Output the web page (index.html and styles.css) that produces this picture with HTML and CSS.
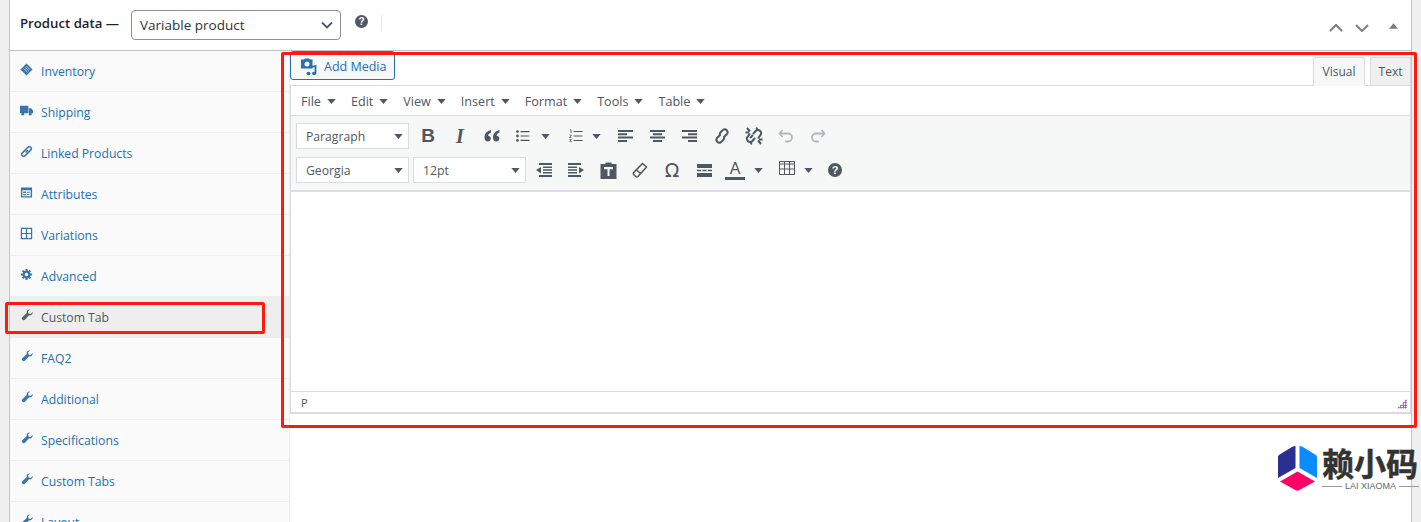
FILE: index.html
```html
<!DOCTYPE html>
<html lang="en">
<head>
<meta charset="utf-8">
<title>Product data</title>
<link rel="stylesheet" href="styles.css">
</head>
<body>
<svg class="defs" width="0" height="0" aria-hidden="true">
  <symbol id="wrench" viewBox="0 0 14 14"><path d="M13.600 3.400c.2 1.200-.1 2.300-1 3.100-.9.900-2.100 1.200-3.200.9L4.600 12.600c-.6.700-1.700.8-2.400.1l-.8-.8c-.7-.7-.6-1.800.1-2.400l5.200-4.800c-.3-1.100 0-2.300.9-3.200.8-.9 1.900-1.200 3.100-1L8.300 2.700l.4 2.500 2.500.5z" fill="currentColor"/></symbol>
  <symbol id="arrow" viewBox="0 0 10 6"><path d="M0 0h10L5 6z" fill="currentColor"/></symbol>
</svg>
<div class="page">
  <section class="box">
    <header class="head">
      <span class="title">Product data —</span>
      <div class="type-select"><span>Variable product</span>
        <svg class="chev" viewBox="0 0 12 8" width="12" height="8"><path d="M1 1.500l5 5 5-5" fill="none" stroke="currentColor" stroke-width="1.800"/></svg>
      </div>
      <span class="q small">?</span>
      <span class="sep"></span>
      <div class="head-actions">
        <svg class="ha" viewBox="0 0 14 8" width="14" height="8"><path d="M1 7l6-6 6 6" fill="none" stroke="currentColor" stroke-width="2"/></svg>
        <svg class="ha down" viewBox="0 0 14 8" width="14" height="8"><path d="M1 1l6 6 6-6" fill="none" stroke="currentColor" stroke-width="2"/></svg>
        <svg class="tri" viewBox="0 0 10 6" width="9" height="6"><path d="M0 6h10L5 0z" fill="currentColor"/></svg>
      </div>
    </header>
    <div class="body">
      <ul class="tabs">
        <li class="tab"><svg class="ti" viewBox="0 0 14 14"><path d="M7 .5L13.500 7 7 13.500.5 7z" fill="currentColor"/><path d="M4 6l4 4M5.500 4.500l4 4M7 3.500l3.500 3.500" stroke="#fff" stroke-width=".7"/></svg><span>Inventory</span></li>
        <li class="tab"><svg class="ti" viewBox="0 0 14 14"><path d="M0 2h9v8H0zM9.500 4.500h2.500l2 2.500v3h-4.500z" fill="currentColor"/><circle cx="3" cy="11" r="1.500" fill="currentColor"/><circle cx="11" cy="11" r="1.500" fill="currentColor"/></svg><span>Shipping</span></li>
        <li class="tab"><svg class="ti" viewBox="0 0 14 14"><path d="M6 8l2.500-2.500M5.500 5.500L2.500 8.500a2 2 0 0 0 3 3l3-3M8.500 8.500l3-3a2 2 0 0 0-3-3l-3 3" fill="none" stroke="currentColor" stroke-width="1.600"/></svg><span>Linked Products</span></li>
        <li class="tab"><svg class="ti" viewBox="0 0 14 14"><path d="M1 1.500h12v11H1zM2.500 4.500v6.500h9V4.500zM3.500 6h3v1.500h-3zM3.500 8.500h3V10h-3zM7.500 6.300h3v1h-3zM7.500 8.800h3v1h-3z" fill="currentColor" fill-rule="evenodd"/></svg><span>Attributes</span></li>
        <li class="tab"><svg class="ti" viewBox="0 0 14 14"><path d="M1.500 1.500h11v11h-11zM7 1.500v11M1.500 7h11" fill="none" stroke="currentColor" stroke-width="1.300"/></svg><span>Variations</span></li>
        <li class="tab"><svg class="ti" viewBox="0 0 14 14"><circle cx="7" cy="7" r="3" fill="none" stroke="currentColor" stroke-width="2.400"/><path d="M7 1v3M7 10v3M1 7h3M10 7h3M2.800 2.800l2.100 2.100M9.100 9.100l2.100 2.100M2.800 11.200l2.100-2.100M9.100 4.900l2.100-2.100" stroke="currentColor" stroke-width="2.200"/></svg><span>Advanced</span></li>
        <li class="tab active"><svg class="ti wr"><use href="#wrench"/></svg><span>Custom Tab</span></li>
        <li class="tab"><svg class="ti wr"><use href="#wrench"/></svg><span>FAQ2</span></li>
        <li class="tab"><svg class="ti wr"><use href="#wrench"/></svg><span>Additional</span></li>
        <li class="tab"><svg class="ti wr"><use href="#wrench"/></svg><span>Specifications</span></li>
        <li class="tab"><svg class="ti wr"><use href="#wrench"/></svg><span>Custom Tabs</span></li>
        <li class="tab"><svg class="ti wr"><use href="#wrench"/></svg><span>Layout</span></li>
      </ul>
      <main class="panel">
        <div class="ed-head">
          <button class="media">
            <svg viewBox="0 0 18 18" width="18" height="18"><path d="M1 1.500h3l1-1h4l1 1h2.500v9H1zM7 3.500a2.500 2.500 0 1 0 0 5 2.500 2.500 0 0 0 0-5z" fill="currentColor" fill-rule="evenodd"/><path d="M9.500 9.500l6-1.500v7.500" fill="none" stroke="currentColor" stroke-width="1.800"/><ellipse cx="8.500" cy="15.500" rx="2" ry="1.800" fill="currentColor"/><ellipse cx="14" cy="15.500" rx="2" ry="1.800" fill="currentColor"/></svg>
            <span>Add Media</span>
          </button>
          <div class="modes">
            <span class="mode visual">Visual</span>
            <span class="mode text">Text</span>
          </div>
        </div>
        <div class="editor">
          <nav class="menubar">
            <span class="mi">File<svg class="ar"><use href="#arrow"/></svg></span>
            <span class="mi">Edit<svg class="ar"><use href="#arrow"/></svg></span>
            <span class="mi">View<svg class="ar"><use href="#arrow"/></svg></span>
            <span class="mi">Insert<svg class="ar"><use href="#arrow"/></svg></span>
            <span class="mi">Format<svg class="ar"><use href="#arrow"/></svg></span>
            <span class="mi">Tools<svg class="ar"><use href="#arrow"/></svg></span>
            <span class="mi">Table<svg class="ar"><use href="#arrow"/></svg></span>
          </nav>
          <div class="toolbar">
            <div class="row">
              <div class="lb">Paragraph<svg class="ar"><use href="#arrow"/></svg></div>
              <div class="btns first">
                <span class="b glyph bold">B</span>
                <span class="b glyph ital">I</span>
                <span class="b"><svg viewBox="0 0 16 14" width="16" height="14"><path d="M7 1C3 2 .5 4.500.5 8.500c0 2.500 1.500 4 3.300 4s3-1.300 3-3-1.200-2.800-2.800-2.800c.3-1.500 1.500-2.700 3-3.200zM15.500 1c-4 1-6.500 3.500-6.500 7.500 0 2.500 1.500 4 3.300 4s3-1.300 3-3-1.200-2.800-2.800-2.800c.3-1.500 1.500-2.700 3-3.200z" fill="currentColor"/></svg></span>
                <span class="b split w53"><svg viewBox="0 0 14 14" width="14" height="14"><path d="M4.500 2h9v1.200h-9zM4.500 6.400h9v1.200h-9zM4.500 10.800h9V12h-9z" fill="currentColor"/><circle cx="1.500" cy="2.600" r="1.400" fill="currentColor"/><circle cx="1.500" cy="7" r="1.400" fill="currentColor"/><circle cx="1.500" cy="11.400" r="1.400" fill="currentColor"/></svg><svg class="ar"><use href="#arrow"/></svg></span>
                <span class="b split w49"><svg viewBox="0 0 14 14" width="14" height="14"><path d="M4.500 2h9v1h-9zM4.500 6.500h9v1h-9zM4.500 11h9v1h-9z" fill="currentColor"/><path d="M1 1l1-.5v3.500M.5 6h2l-2 2.500h2M.5 10.500h2l-1 1 1 1.200h-2" fill="none" stroke="currentColor" stroke-width=".8"/></svg><svg class="ar"><use href="#arrow"/></svg></span>
                <span class="b"><svg viewBox="0 0 15 12" width="15" height="12"><path d="M0 0h15v2H0zM0 3.300h9v2H0zM0 6.600h15v2H0zM0 10h9v2H0z" fill="currentColor"/></svg></span>
                <span class="b"><svg viewBox="0 0 15 12" width="15" height="12"><path d="M0 0h15v2H0zM3 3.300h9v2H3zM0 6.600h15v2H0zM3 10h9v2H3z" fill="currentColor"/></svg></span>
                <span class="b w33"><svg viewBox="0 0 15 12" width="15" height="12"><path d="M0 0h15v2H0zM6 3.300h9v2H6zM0 6.600h15v2H0zM6 10h9v2H6z" fill="currentColor"/></svg></span>
                <span class="b"><svg viewBox="0 0 18 18" width="18" height="18"><path d="M7.500 7.500L4 11a2.900 2.900 0 0 0 4 4.100l2.400-2.400a3 3 0 0 0 .3-3.700M10.500 10.500L14 7a2.900 2.900 0 0 0-4-4.100L7.600 5.300a3 3 0 0 0-.3 3.700" fill="none" stroke="currentColor" stroke-width="2"/></svg></span>
                <span class="b"><svg viewBox="0 0 18 18" width="18" height="18"><path d="M5 6.500L2.800 9.500a3 3 0 0 0 4.500 4.500L10 11M13 11.500l2.200-3a3 3 0 0 0-4.500-4.500L8 7M2 1l3 3.500M.5 5.500H4M16 17l-3-3.500M17.500 12.500H14M12 .5l-.5 3M6 17.500l.5-3M5 11l3-3" fill="none" stroke="currentColor" stroke-width="2"/></svg></span>
                <span class="b muted"><svg viewBox="0 0 16 14" width="16" height="14"><path d="M4.500 1L1.500 4.500 4.500 8M2 4.500h8a4 4 0 0 1 0 8H7" fill="none" stroke="currentColor" stroke-width="1.800"/></svg></span>
                <span class="b muted"><svg viewBox="0 0 16 14" width="16" height="14"><path d="M11.500 1l3 3.500-3 3.500M14 4.500H6a4 4 0 0 0 0 8h3" fill="none" stroke="currentColor" stroke-width="1.800"/></svg></span>
              </div>
            </div>
            <div class="row">
              <div class="lb">Georgia<svg class="ar"><use href="#arrow"/></svg></div>
              <div class="lb">12pt<svg class="ar"><use href="#arrow"/></svg></div>
              <div class="btns second">
                <span class="b"><svg viewBox="0 0 16 14" width="16" height="14"><path d="M3 0h13v2H3zM7 3.500h9v1.500H7zM7 6.200h9v1.500H7zM7 9h9v1.500H7zM3 12h13v2H3zM5 4v6.500L0 7z" fill="currentColor"/></svg></span>
                <span class="b"><svg viewBox="0 0 16 14" width="16" height="14"><path d="M0 0h13v2H0zM0 3.500h9v1.500H0zM0 6.200h9v1.500H0zM0 9h9v1.500H0zM0 12h13v2H0zM11 4v6.500L16 7z" fill="currentColor"/></svg></span>
                <span class="b"><svg viewBox="0 0 17 17" width="17" height="17"><path d="M5.500 2V.5h6V2H16.500v15H.5V2zM4 5v2.200h3.500V14h2V7.200H13V5z" fill="currentColor" fill-rule="evenodd"/></svg></span>
                <span class="b"><svg viewBox="0 0 16 16" width="16" height="16"><path d="M10.500 1.500l4 3.500-8.500 9.500c-.7.700-1.500.700-2.200 0l-2-1.900c-.7-.7-.7-1.500 0-2.200zM4.500 8l4 3.500" fill="none" stroke="currentColor" stroke-width="1.500"/></svg></span>
                <span class="b glyph omega">Ω</span>
                <span class="b"><svg viewBox="0 0 15 13" width="15" height="13"><path d="M0 0h15v4H0zM0 9h15v4H0zM0 5.800h4v1.400H0zM5.500 5.800h4v1.400h-4zM11 5.800h4v1.400h-4z" fill="currentColor"/></svg></span>
                <span class="b split w51"><span class="color-a"><span class="a">A</span><span class="a-bar"></span></span><svg class="ar"><use href="#arrow"/></svg></span>
                <span class="b split w48"><svg class="grid" viewBox="0 0 16 14" width="16" height="14"><path d="M.5.500h15v13H.5zM.5 3h15M.5 8h15M5.500.5v13M10.500.5v13" fill="none" stroke="currentColor" stroke-width="1"/></svg><svg class="ar"><use href="#arrow"/></svg></span>
                <span class="b"><span class="q">?</span></span>
              </div>
            </div>
          </div>
          <div class="content"></div>
          <div class="status"><span>P</span><span class="grip"></span></div>
        </div>
      </main>
    </div>
  </section>
</div>
<div class="mark mark-main"></div>
<div class="mark mark-tab"></div>
<aside class="logo">
  <svg viewBox="0 0 42 46" width="42" height="46"><path d="M18.500 1v22L1 33V12c0-1 .5-1.700 1.300-2.200l13-8c1-.6 2.200-.8 3.200-.8z" fill="#2b2f91"/><path d="M22.500 1c1 0 2.100.2 3 .8l13 8c.8.500 1.500 1.200 1.500 2.200v21L22.500 23z" fill="#0a8cff"/><path d="M20.500 26.500L38 36.500 22 45.300c-1 .5-2.200.5-3.200 0L3 36.500z" fill="#ff0066"/></svg>
  <div class="logo-text">
    <span class="logo-cn">赖小码</span>
    <span class="logo-en"><i></i>LAI XIAOMA<i></i></span>
  </div>
</aside>
</body>
</html>
```
FILE: styles.css
```css
* { box-sizing: border-box; }
html, body { margin: 0; height: 522px; overflow: hidden; }
body { background: #f0f0f1; font-family: "Open Sans", "Noto Sans", sans-serif; font-size: 12.2px; color: #50575e; position: relative; }
.defs { position: absolute; }
.page { padding-left: 9px; padding-right: 9px; height: 522px; }
.box { background: #fff; border: 1px solid #c3c4c7; border-width: 0 1px; height: 522px; }
.head { height: 51px; border-bottom: 1px solid #c3c4c7; display: flex; align-items: flex-start; padding: 10px 0 0 10px; }
.title { font-weight: 600; font-size: 13.2px; color: #1d2327; line-height: 26px; width: 111px; flex: none; }
.type-select { width: 210px; height: 30px; border: 1px solid #8c8f94; border-radius: 4px; display: flex; align-items: center; justify-content: space-between; padding: 0 7px 0 8px; font-size: 13.5px; color: #2c3338; }
.chev { color: #50575e; }
.q { width: 14px; height: 14px; border-radius: 50%; background: #50575e; color: #fff; font: 700 11px/14px "Liberation Sans", sans-serif; text-align: center; display: block; }
.q.small { width: 13px; height: 13px; line-height: 13px; font-size: 10px; margin: 5px 0 0 14px; }
.sep { width: 1px; height: 16px; background: #e5e5e5; margin: 5px 0 0 13px; }
.head-actions { margin-left: auto; display: flex; align-items: center; height: 14px; margin-top: 11px; padding-right: 13px; }
.ha { color: #787c82; margin-right: 12px; }
.ha.down { color: #8a7f73; margin-right: 20px; }
.tri { color: #787c82; margin-top: -5px; }
.body { display: flex; height: 471px; overflow: hidden; }
.tabs { list-style: none; margin: 0; padding: 0; width: 280px; flex: none; background: #fafafa; border-right: 1px solid #eee; height: 471px; }
.tab { height: 41px; border-bottom: 1px solid #eee; display: flex; align-items: center; padding: 0 0 0 10px; color: #2271b1; }
.tab span { line-height: 40px; margin-top: 1px; }
.tab.active { background: #eee; color: #50575e; border-bottom-color: #eee; }
.ti { width: 13px; height: 13px; margin: -3px 8px 0 0; flex: none; color: #3b74ab; }
.ti.wr { width: 12px; height: 12px; margin: -4px 8px 0 1px; }
.tab.active .ti { color: #5b6167; }
.panel { flex: 1; min-width: 0; }
.ed-head { height: 34px; display: flex; justify-content: space-between; align-items: flex-start; }
.media { width: 105px; height: 29px; border: 1px solid #2271b1; border-radius: 3px; background: #f6f7f7; color: #2271b1; display: flex; align-items: center; gap: 6px; padding: 2px 0 0 9px; font: 12.5px "Open Sans", sans-serif; }
.modes { display: flex; gap: 5px; margin-top: 6px; }
.mode { height: 29px; border: 1px solid #dcdcde; line-height: 28px; text-align: center; font-size: 12px; }
.visual { width: 52px; background: #f6f7f7; border-bottom-color: #f6f7f7; }
.text { width: 41px; background: #f0f0f1; }
.editor { border: 1px solid #dcdcde; border-bottom-width: 2px; height: 329px; display: flex; flex-direction: column; background: #fff; }
.menubar { height: 30px; flex: none; display: flex; align-items: center; padding: 1px 0 0 10px; gap: 15px; border-bottom: 1px solid #dcdcde; font-size: 12.6px; }
.mi { display: flex; align-items: center; gap: 6px; }
.ar { width: 9px; height: 5px; color: #50575e; flex: none; }
.toolbar { height: 76px; flex: none; background: #f6f7f7; border-bottom: 2px solid #dcdcde; padding: 7px 0 0 5px; display: flex; flex-direction: column; gap: 8px; }
.row { display: flex; gap: 4px; height: 26px; }
.lb { width: 113px; height: 26px; background: #fff; border: 1px solid #dcdcde; display: flex; align-items: center; justify-content: space-between; padding: 0 5px 0 9px; font-size: 12.2px; }
.btns { display: flex; align-items: center; height: 26px; }
.btns.first { margin-left: -1px; }
.btns.second { margin-left: -2px; }
.b { width: 32px; height: 26px; flex: none; display: flex; align-items: center; justify-content: center; color: #50575e; }
.b.muted { color: #b5b8bb; }
.w33 { width: 33px; }
.split { gap: 9px; justify-content: flex-start; padding-left: 8px; }
.w53 { width: 53px; gap: 11px; }
.w49 { width: 48px; }
.w51 { width: 51px; padding-left: 5px; gap: 9px; }
.w48 { width: 48px; }
.grid { margin-top: -4px; }
.glyph { font-family: "Liberation Sans", sans-serif; }
.bold { font-weight: 700; font-size: 19px; }
.ital { font-family: "Liberation Serif", serif; font-style: italic; font-weight: 700; font-size: 20px; }
.omega { font-size: 19px; font-family: "DejaVu Sans", sans-serif; }
.color-a { width: 20px; display: flex; flex-direction: column; align-items: center; }
.a { font: 400 16px/16px "Liberation Sans", sans-serif; }
.a-bar { width: 20px; height: 3px; background: #50575e; }
.content { flex: 1; }
.status { height: 21px; flex: none; border-top: 1px solid #dcdcde; display: flex; align-items: center; justify-content: space-between; padding: 0 3px 0 10px; font-size: 11px; }
.grip { width: 10px; height: 10px; margin-top: 3px; background: radial-gradient(circle, #8a4fb0 0 1px, transparent 1.1px) 0 0 / 2.500px 2.500px; clip-path: polygon(100% 0, 100% 100%, 0 100%); }
.mark { position: absolute; border: 3px solid #ff1a0f; border-radius: 2px; pointer-events: none; }
.mark-main { left: 281px; top: 52px; width: 1136px; height: 376px; }
.mark-tab { left: 5px; top: 302px; width: 260px; height: 32px; }
.logo { position: absolute; left: 1277px; top: 445px; display: flex; gap: 3px; align-items: flex-start; }
.logo-text { display: flex; flex-direction: column; width: 97px; }
.logo-cn { font: 700 32px/34px "Noto Sans CJK SC", sans-serif; color: #333; white-space: nowrap; -webkit-text-stroke: .5px #333; }
.logo-en { display: flex; align-items: center; gap: 3px; font: 9px/10px "Liberation Sans", sans-serif; color: #666; margin-top: 2px; white-space: nowrap; }
.logo-en i { flex: 1; height: 1px; background: #999; }
```
